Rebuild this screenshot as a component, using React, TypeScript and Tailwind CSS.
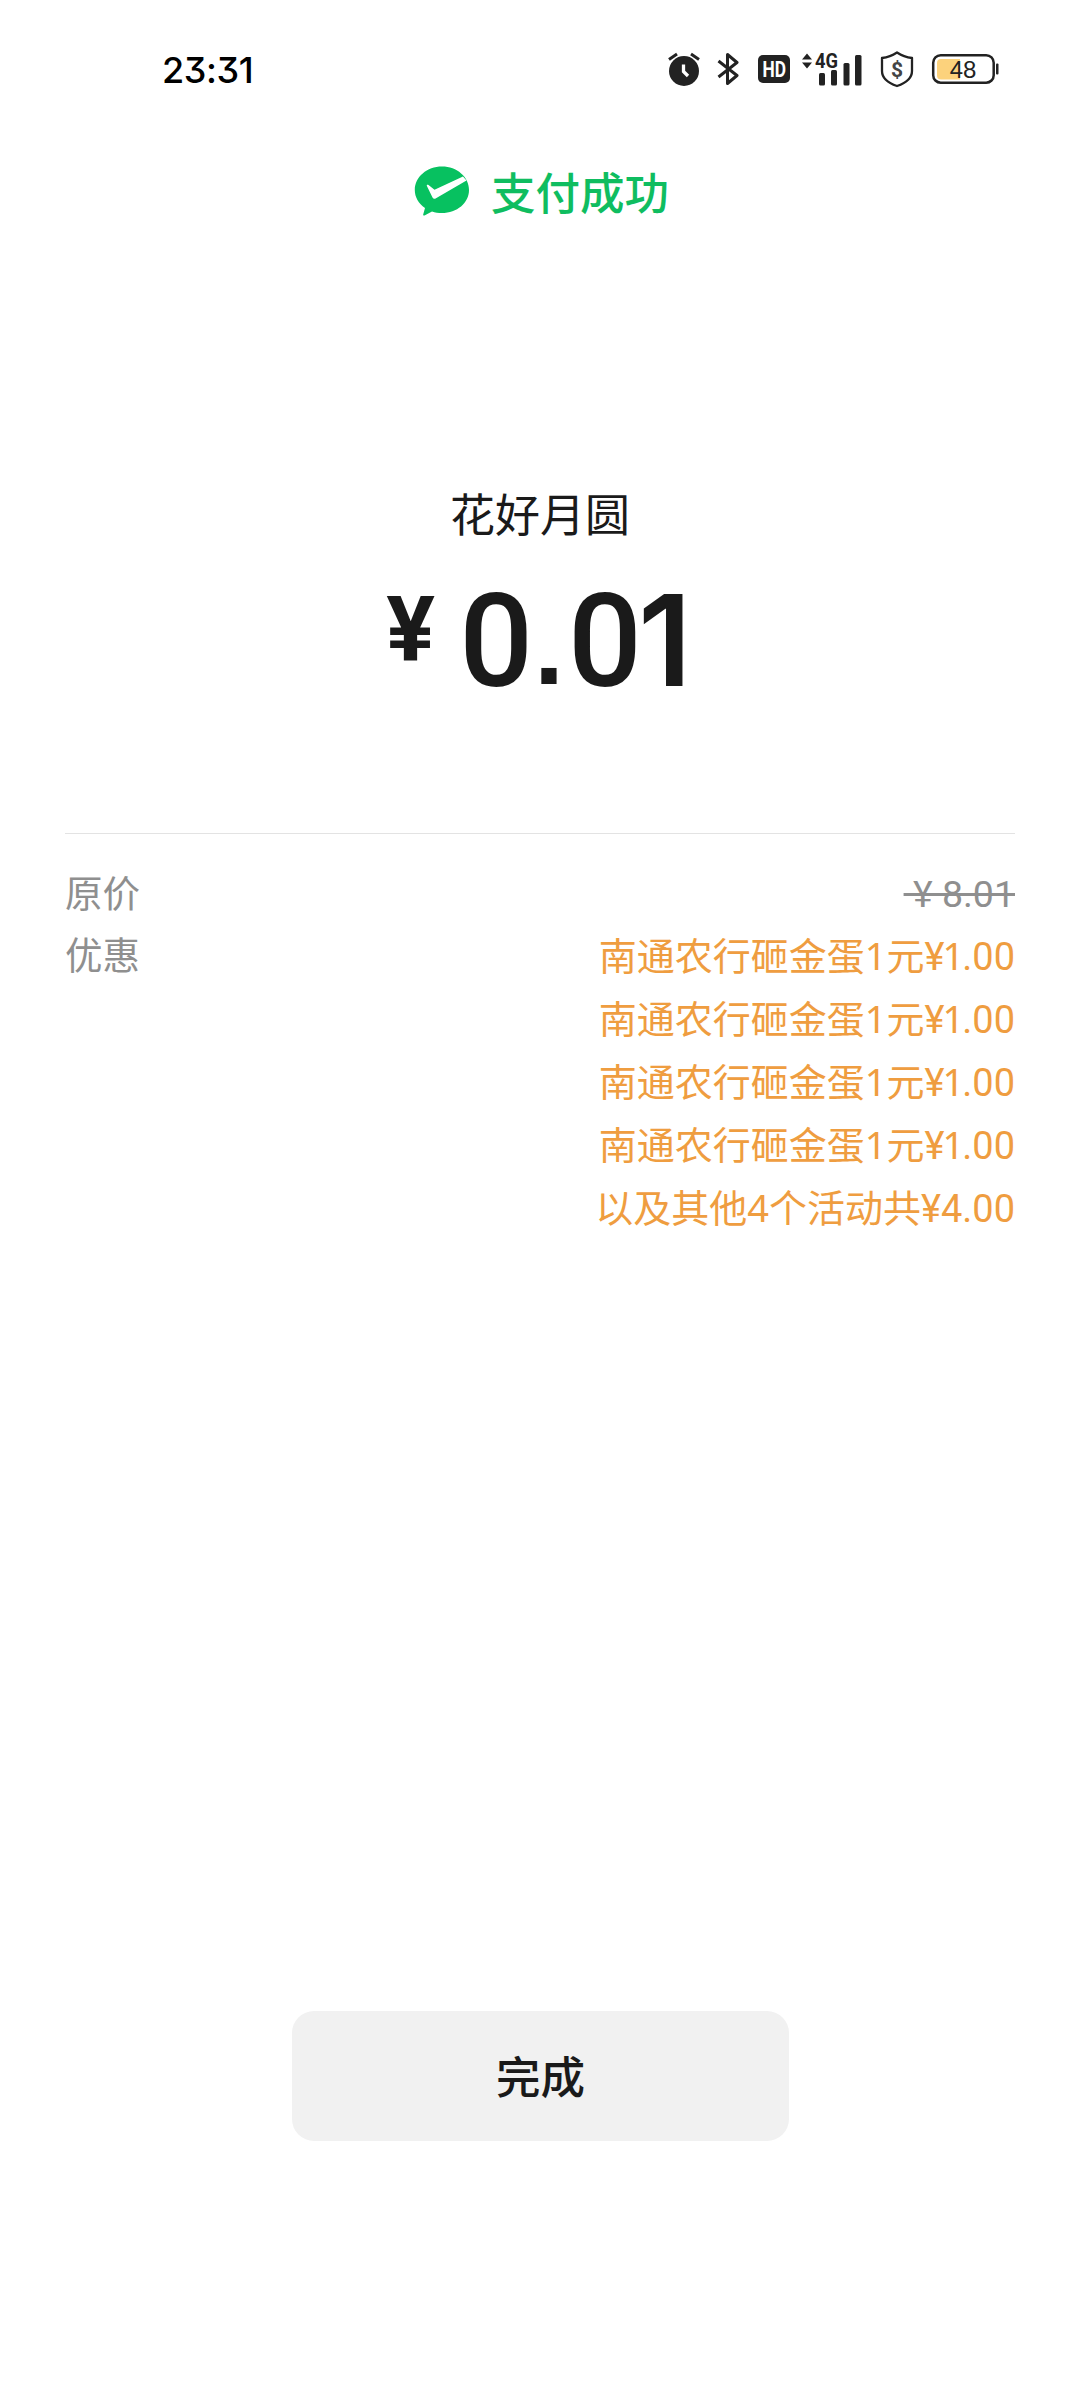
const discounts = [
  { label: "南通农行砸金蛋1元", amount: "¥1.00" },
  { label: "南通农行砸金蛋1元", amount: "¥1.00" },
  { label: "南通农行砸金蛋1元", amount: "¥1.00" },
  { label: "南通农行砸金蛋1元", amount: "¥1.00" },
  { label: "以及其他4个活动共", amount: "¥4.00" },
];

// The digit 1 is set tighter than the other figures
function Amount({ text }: { text: string }) {
  return (
    <span className="font-['Roboto',sans-serif]">
      {text.split("").map((char, i) =>
        char === "1" ? (
          <span key={i} className="-ml-[2px] -mr-[2px] font-['Noto_Sans',sans-serif]">
            1
          </span>
        ) : (
          char
        )
      )}
    </span>
  );
}

function StatusBar() {
  return (
    <header className="flex h-[138px] items-center justify-between pl-[162px] pr-[80px] text-[#222]">
      <span className="mt-[2px] font-['Inter',sans-serif] text-[36px] font-medium leading-none tracking-[-0.4px] text-black [font-feature-settings:'cv09']">
        23:31
      </span>

      <div className="flex items-center">
        {/* Alarm */}
        <svg className="h-[36px] w-[34px]" viewBox="0 0 34 36">
          <circle cx="17" cy="20" r="15" fill="currentColor" />
          <path d="M2 8.500L10 3M24 3L32 8.500" stroke="currentColor" strokeWidth="3" fill="none" />
          <path d="M16.500 13.500V20.500L21 25" stroke="#fff" strokeWidth="3.300" fill="none" />
        </svg>

        {/* Bluetooth */}
        <svg className="ml-[16px] h-[36px] w-[22px]" viewBox="0 0 22 36">
          <path
            d="M1.500 10L20 24.500L10.500 32.500V3.500L20 11.500L1.500 26"
            stroke="currentColor"
            strokeWidth="3"
            strokeLinejoin="round"
            fill="none"
          />
        </svg>

        {/* HD */}
        <svg className="ml-[19px] h-[28px] w-[32px] overflow-visible" viewBox="0 0 32 28">
          <rect width="32" height="28" rx="5" fill="currentColor" />
          <text x="4.500" y="21.500" fontFamily="Roboto, sans-serif" fontSize="21.500" fontWeight="700" fill="#fff" textLength="23.500" lengthAdjust="spacingAndGlyphs">
            HD
          </text>
        </svg>

        {/* Signal */}
        <svg className="ml-[12px] h-[36px] w-[62px] overflow-visible" viewBox="0 0 62 36" fill="currentColor">
          <path d="M5 2.500L10 8.500H0ZM5 17.500L0 11.500H10Z" />
          <text x="13" y="17" fontFamily="Roboto, sans-serif" fontSize="21" fontWeight="700" textLength="23" lengthAdjust="spacingAndGlyphs">
            4G
          </text>
          <rect x="17" y="22" width="6" height="12.500" rx="1.500" />
          <rect x="29" y="19" width="6" height="15.500" rx="1.500" />
          <rect x="41.500" y="12" width="6" height="22.500" rx="1.500" />
          <rect x="53" y="4" width="6.500" height="30.500" rx="1.500" />
        </svg>

        {/* Security shield */}
        <svg className="ml-[16px] h-[38px] w-[34px]" viewBox="0 0 34 38">
          <path
            d="M17 2.500C21.500 5.500 26 7.300 32 8V21C32 28.500 26 33 17 36C8 33 2 28.500 2 21V8C8 7.300 12.500 5.500 17 2.500Z"
            stroke="currentColor"
            strokeWidth="2.300"
            strokeLinejoin="round"
            fill="none"
          />
          <text x="17" y="26.500" textAnchor="middle" fontFamily="Roboto, sans-serif" fontSize="21" fontWeight="700" fill="#444">
            $
          </text>
        </svg>

        {/* Battery */}
        <svg className="ml-[17px] h-[32px] w-[69px]" viewBox="0 0 69 32">
          <rect x="2.200" y="2.200" width="60.500" height="27.500" rx="7.500" fill="#fff" stroke="currentColor" strokeWidth="2.500" />
          <path d="M10 6H29V26.500H10A4 4 0 0 1 6 22.500V10A4 4 0 0 1 10 6Z" fill="#fcd27c" />
          <rect x="65" y="10.500" width="2.500" height="11" rx="1" fill="currentColor" />
          <text x="32" y="24.500" textAnchor="middle" fontFamily="Liberation Sans, sans-serif" fontSize="24" fill="#222">
            48
          </text>
        </svg>
      </div>
    </header>
  );
}

function WeChatPayLogo() {
  return (
    <svg className="-mt-[2px] h-[50px] w-[56px]" viewBox="0 0 56 50">
      <path
        d="M28 0.500C43 0.500 55 11 55 24C55 37 43 47 28 47C24.500 47 21 46.500 18 45.500L10.500 49.500C9.500 49.800 9 49.300 9.200 48.500L11 42C4.500 37.500 0.800 31 0.800 24C0.800 11 13 0.500 28 0.500Z"
        fill="#07c160"
      />
      <path d="M49 10.500L20.500 23.700L14.500 19C13.300 18.200 12.300 19 13 20.200L18.500 31.500C19.300 33 20.500 33.200 22 32.300L52.500 14.500Z" fill="#fff" />
    </svg>
  );
}

export default function App() {
  return (
    <div className="flex h-[2400px] w-[1080px] flex-col bg-white font-['Noto_Sans','Noto_Sans_CJK_SC',sans-serif] text-[#1a1a1a]">
      <StatusBar />

      <div className="flex h-[108px] items-center justify-center gap-[21px] pl-[3px]">
        <WeChatPayLogo />
        <h1 className="mt-[1px] text-[44.500px] font-medium leading-[60px] text-[#0fbd60]">支付成功</h1>
      </div>

      {/* Merchant and paid amount */}
      <section className="mt-[235px] flex flex-col items-center">
        <p className="text-[45px] leading-[68px]">花好月圆</p>
        <div className="mt-[23px] flex h-[142px] items-start pr-[2px] font-['Roboto',sans-serif] text-[130px] leading-[140px]">
          <span className="-mt-[2px] text-[91px] font-bold leading-[120px]">¥</span>
          <span className="ml-[24px] font-medium">0</span>
          <span className="-mt-[4px] ml-[1px] font-['Liberation_Sans',sans-serif] text-[108px] font-bold leading-[158px]">.</span>
          <span className="ml-[4px] font-medium">0</span>
          <span className="-ml-[4px] -mt-[2px] font-['Inter',sans-serif] text-[127px] font-semibold leading-[140px]">1</span>
        </div>
      </section>

      {/* Price breakdown */}
      <section className="mx-[65px] mt-[119px] border-t border-[#e3e3e3] pt-[28px] text-[38px] leading-[63px]">
        <div className="flex h-[63px] justify-between text-[#8f8f8f]">
          <span className="-mt-[1px] text-[37.500px]">原价</span>
          <span className="mt-[1px] font-['Roboto',sans-serif] text-[37.500px] line-through">&nbsp;¥ 8.01</span>
        </div>
        <div className="flex justify-between">
          <span className="-mt-[2px] text-[37.500px] text-[#8f8f8f]">优惠</span>
          <ul className="-mt-[1px] text-right text-[#ef9d40]">
            {discounts.map((item, i) => (
              <li key={i} className="h-[63px]">
                {item.label}
                <Amount text={item.amount} />
              </li>
            ))}
          </ul>
        </div>
      </section>

      <button className="mx-auto mt-[772px] h-[130px] w-[497px] rounded-[22px] bg-[#f1f1f1] pt-[3px] pl-[1px] text-[44.500px] font-medium">
        完成
      </button>
    </div>
  );
}
